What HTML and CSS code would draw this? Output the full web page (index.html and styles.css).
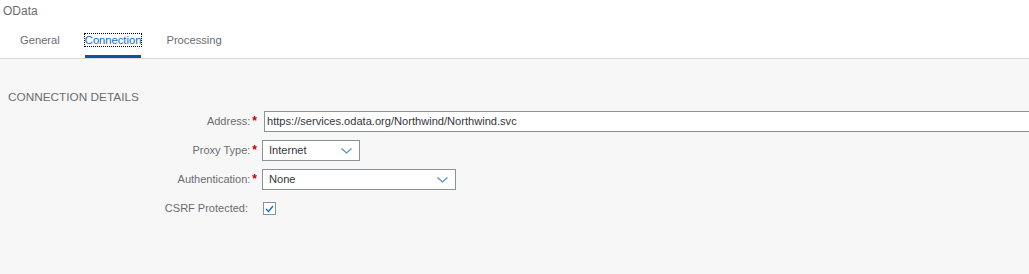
FILE: index.html
```html
<!DOCTYPE html>
<html>
<head>
<meta charset="utf-8">
<title>OData - Connection</title>
<link rel="stylesheet" href="styles.css">
</head>
<body>
<div class="header">
    <div class="title">OData</div>
    <div class="tabs">
        <div class="tab">General</div>
        <div class="tab active"><span class="tab-text">Connection</span></div>
        <div class="tab">Processing</div>
    </div>
</div>

<div class="content">
    <div class="section-title">CONNECTION DETAILS</div>
    <div class="form">
        <label class="label">Address:<span class="req">*</span></label>
        <div class="field">
            <div class="input address">https://services.odata.org/Northwind/Northwind.svc</div>
        </div>

        <label class="label">Proxy Type:<span class="req">*</span></label>
        <div class="field">
            <div class="input select proxy">
                <span>Internet</span>
                <svg class="chevron" width="11" height="6" viewBox="0 0 11 6"><path d="M0.5 0.5 L5.5 5 L10.5 0.5" fill="none" stroke="#5b8fc7" stroke-width="1.2"/></svg>
            </div>
        </div>

        <label class="label">Authentication:<span class="req">*</span></label>
        <div class="field">
            <div class="input select auth">
                <span>None</span>
                <svg class="chevron" width="11" height="6" viewBox="0 0 11 6"><path d="M0.5 0.5 L5.5 5 L10.5 0.5" fill="none" stroke="#5b8fc7" stroke-width="1.2"/></svg>
            </div>
        </div>

        <label class="label optional">CSRF Protected:</label>
        <div class="field">
            <div class="checkbox">
                <svg width="9" height="8" viewBox="0 0 9 8"><path d="M1 4 L3.5 6.5 L8 1" fill="none" stroke="#0a6ed1" stroke-width="1.3"/></svg>
            </div>
        </div>
    </div>
</div>
</body>
</html>
```

FILE: styles.css
```css
/* page */
body {
    margin: 0;
    background-color: #f7f7f7;
    font-family: 'Liberation Sans', Arial, sans-serif;
    font-size: 11px;
    color: #32363a;
    overflow: hidden;
}

/* header with tabs */
.header {
    background: #fff;
    height: 58px;
    border-bottom: 1px solid #d9d9d9;
}

.title {
    padding: 3px 0 0 3px;
    font-size: 12px;
    color: #6a6d70;
    line-height: 16px;
}

.tabs {
    display: flex;
    padding-left: 20px;
    gap: 25px;
    margin-top: 14px;
}

.tab {
    color: #6a6d70;
    font-size: 11.2px;
    line-height: 14px;
    padding-bottom: 8px;
    border-bottom: 3px solid transparent;
}

.tab.active {
    color: #0a6ed1;
    border-bottom-color: #0854a0;
}

.tab-text {
    outline: 1px dotted #000;
    outline-offset: 0;
}

/* form */
.content {
    padding: 31px 0 0 8px;
}

.section-title {
    color: #6a6d70;
    font-size: 11.8px;
    line-height: 14px;
}

.form {
    display: grid;
    grid-template-columns: 249px 1fr;
    row-gap: 8px;
    column-gap: 5px;
    margin-top: 7px;
}

.label {
    text-align: right;
    color: #6a6d70;
    font-size: 11px;
    line-height: 21px;
}

.label.optional {
    padding-right: 9px;
}

.req {
    color: #bb0000;
    margin-left: 2px;
    font-size: 12px;
    font-weight: bold;
}

.field {
    display: flex;
    align-items: center;
}

.input {
    box-sizing: border-box;
    height: 21px;
    border: 1px solid #89919a;
    background: #fff;
    padding: 0 6px;
    line-height: 19px;
    font-size: 11.1px;
    color: #32363a;
    white-space: nowrap;
}

.address {
    width: 100%;
    margin-left: 2px;
    padding-left: 2px;
    border-right: 0;
}

.select {
    display: flex;
    align-items: center;
    justify-content: space-between;
    padding-right: 7px;
}

.proxy {
    width: 98px;
}

.auth {
    width: 194px;
}

.chevron {
    display: block;
}

.checkbox {
    box-sizing: border-box;
    width: 13px;
    height: 13px;
    border: 1px solid #89919a;
    background: #fff;
    margin-left: 1px;
    display: flex;
    align-items: center;
    justify-content: center;
}
```
